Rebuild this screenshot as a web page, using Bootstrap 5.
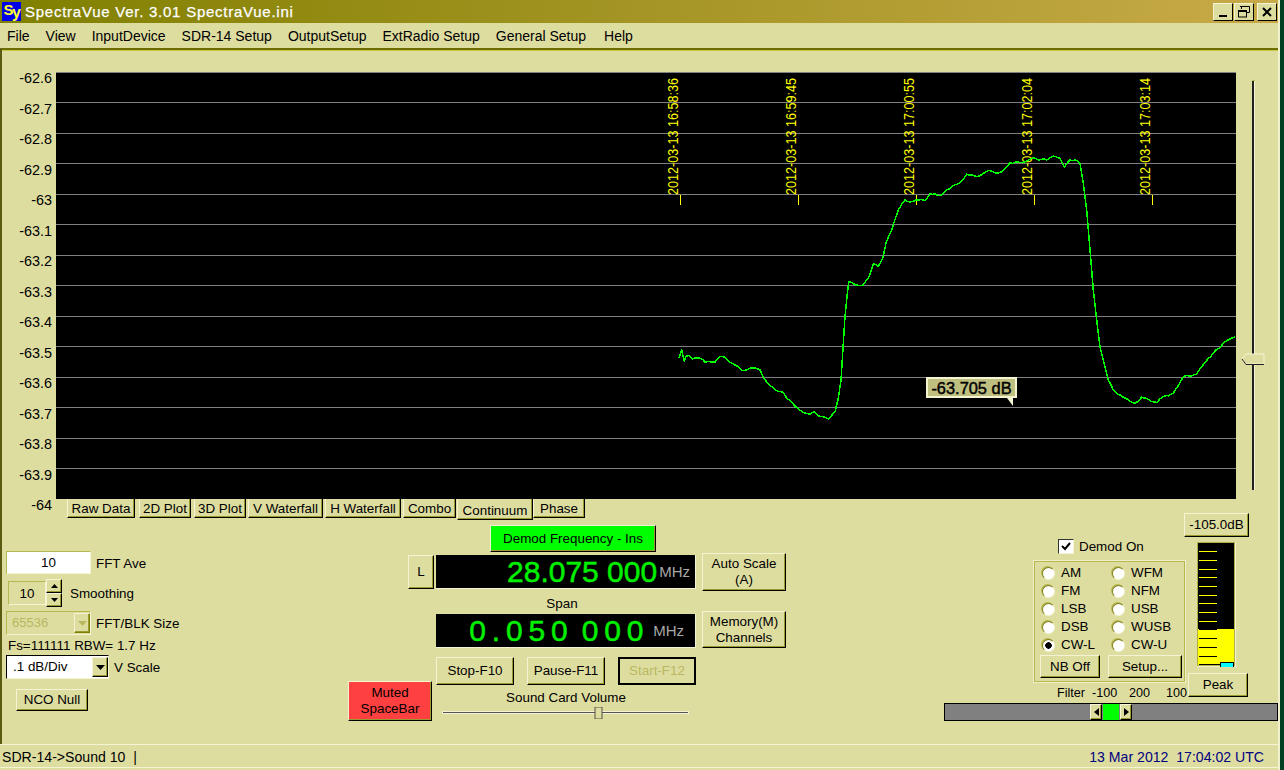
<!DOCTYPE html>
<html lang="en">
<head>
<meta charset="UTF-8">
<title>SpectraVue</title>
<link href="https://cdn.jsdelivr.net/npm/bootstrap@5.3.0/dist/css/bootstrap.min.css" rel="stylesheet">
<style>
    html, body { margin: 0; height: 770px; overflow: hidden; background: #004020; }
    body { font: 13.4px/16px "Liberation Sans", Arial, sans-serif; color: #000; }
    .app { width: 1280px; height: 770px; background: #dedda0; border-right: 2px solid #f0f0cc; }

    .titlebar { height: 23px; padding-left: 2px; background: linear-gradient(90deg, #808000, #c8aa48); color: #fff; }
    .titlebar .caption { margin-left: 4px; font-size: 15px; letter-spacing: .75px; -webkit-text-stroke: .25px #fff; }
    .capbtn { width: 20px; height: 18px; padding: 0; border-radius: 0; background: #dedda0; border: 1px solid; border-color: #f4f4d4 #000 #000 #f4f4d4; display: flex; align-items: center; justify-content: center; }
    .menubar { height: 25px; padding-left: 7px; gap: 16px; font-size: 14px; }
    .menubar .help { margin-left: 2px; }

    .frame { height: 696px; border-top: 2px solid; border-top-color: #6e6e00; border-left: 2px solid #5a5a10; box-shadow: inset 0 1px 0 #c8c840; }
    .plotrow { margin-top: 22px; height: 427px; }
    .axis { width: 50px; margin: -9px 4px -21px 0; font-size: 14.4px; text-align: right; flex: none; }
    .axis div { height: 30.5px; line-height: 30.5px; }
    .plot { position: relative; width: 1180px; height: 427px; background: #000; flex: none; }
    .plot svg { display: block; }
    .tip { position: absolute; left: 870px; top: 305px; width: 91px; height: 21px; background: #bfbf80; border: 2px solid #f4f4d0; font-size: 16.4px; line-height: 18px; text-align: center; -webkit-text-stroke: .45px #000; }

    .btn.win { padding: 0; border-radius: 0; font-size: 13.4px; line-height: 16px; color: #000; background: #dedda0; border: 1px solid; border-color: #f4f4d4 #000 #000 #f4f4d4; box-shadow: inset -1px -1px 0 #9a9a30; }
    .btn.win.red { background: #ff4040; }
    .btn.win.green { background: #00ff00; }
    .btn.win.off { color: #b8b860; border: 2px solid #000; box-shadow: none; }

    .tabs { height: 21px; margin-left: 65px; }
    .btn.tab { height: 19px; border-top: 0; padding-top: 1px; font-size: 13.4px; }
    .btn.tab.on { height: 21px; padding-top: 3px; border-bottom: 1px solid #000; }
    .w-raw { width: 68px; } .w-plot { width: 52px; } .w-vw { width: 75px; } .w-hw { width: 76px; } .w-combo { width: 53px; } .w-cont { width: 76px; } .w-phase { width: 52px; }
    .g4 { margin-left: 4px; } .g3 { margin-left: 3px; } .g2 { margin-left: 2px; } .g1 { margin-left: 1px; }

    .leftcol { width: 346px; padding: 31px 0 0 4px; flex: none; }
    .lbl { padding-top: 2px; }
    .sunk { height: 24px; background: #dedda0; border: 1px solid; border-color: #b8b850 #f4f4d4 #f4f4d4 #b8b850; }
    input.form-control.sunk { padding: 0; border-radius: 0; font-size: 13.4px; text-align: center; color: #000; box-shadow: none; }
    input.form-control.white { width: 85px; height: 23px; background: #fff; }
    input.form-control.spin { width: 38px; background: #dedda0; }
    .spinbtns { width: 16px; }
    .spinbtns .btn.win { width: 16px; height: 14px; }
    .combo { padding-left: 5px; }
    .combo.dim { width: 85px; color: #b8b860; font-size: 13px; background: #dedda0; }
    .combo.vs { width: 103px; height: 24px; padding-left: 6px; background: #fff; border-color: #000 #f4f4d4 #f4f4d4 #000; }
    .btn.win.arrow { width: 16px; height: 20px; flex: none; }
    .r2 { margin: 5px 0 0 2px; height: 28px; }
    .r3 { margin-top: 4px; height: 24px; }
    .r4 { height: 20px; margin-left: 2px; padding-top: 2px; }
    .btn.win.nco { display: block; margin: 10px 0 0 10px; width: 72px; height: 22px; }

    .center { display: grid; flex: none; width: 438px; grid-template-columns: 60px 24px 4px 260px 6px 84px; grid-template-rows: 28px 38px 20px 37px 9px 24px 4px 36px; margin-top: 5px; }
    .lcd { height: 34px; background: #000; color: #00f000; border-bottom: 1px solid #f4f4d4; border-right: 1px solid #f4f4d4; -webkit-text-stroke: .5px #00f000; }
    .lcd small { color: #a8a8a8; font-size: 15px; -webkit-text-stroke: 0; }
    .freq { grid-area: 2 / 4; margin-top: 2px; padding-right: 5px; font-size: 30px; }
    .freq small { margin-left: 2px; }
    .span { grid-area: 4 / 4; margin-top: 3px; padding-right: 11px; font-size: 30px; letter-spacing: 5.8px; word-spacing: -5.8px; }
    .span small { letter-spacing: 0; margin-left: 4px; }
    .demod { grid-area: 1 / 4; margin-left: 54px; width: 166px; height: 27px; }
    .btn.win.lbtn { grid-area: 2 / 2 / 2 / 4; width: 26px; height: 34px; margin-top: 2px; }
    .btn.win.auto { grid-area: 2 / 6; height: 38px; }
    .btn.win.memo { grid-area: 4 / 6; height: 37px; }
    .spanlbl { grid-area: 3 / 4; padding: 0 8px 0 0; margin-bottom: -1px; align-self: end; }
    .transport { grid-area: 6 / 4 / 8 / 4; }
    .transport .btn.win { width: 78px; height: 28px; }
    .muted { grid-area: 7 / 1 / 9 / 3; width: 84px; height: 40px; }
    .volume { grid-area: 8 / 4; padding-top: 5px; }
    .volume svg { display: block; margin: 1px 0 0 6px; }

    .right { width: 334px; margin-left: 158px; flex: none; }
    .right .upper { height: 204px; padding-left: 90px; }
    .modes { width: 151px; padding-top: 40px; flex: none; }
    .demodon { height: 15px; margin-left: 24px; gap: 5px; }
    .chk { width: 16px; height: 15px; background: #fff; border: 1px solid; border-color: #333 #f4f4d4 #f4f4d4 #333; display: flex; align-items: center; justify-content: center; }
    .modebox { width: 151px; height: 121px; margin-top: 7px; padding: 2px 2px 0 5px; border: 1px solid #b8b850; box-shadow: 0 0 0 1px #f0f0c8; }
    .modegrid { display: grid; grid-template-columns: 70px 70px; grid-auto-rows: 18px; }
    .form-check.rad { min-height: 0; margin: 0; padding: 0; display: flex; align-items: center; gap: 6px; }
    .form-check.rad .form-check-input { float: none; margin: 0 0 0 2px; width: 13px; height: 13px; background: #fff; border: 1px solid; border-color: #808020 #f4f4d4 #f4f4d4 #808020; box-shadow: -1px -1px 0 #b8b850; }
    .form-check.rad .form-check-input:checked { background-image: radial-gradient(circle, #000 3px, #fff 3.5px); }
    .btn.win.nb { width: 60px; height: 23px; margin-top: 1px; }
    .btn.win.setup { width: 74px; height: 23px; margin: 1px 0 0 8px; }
    .filterline { margin-top: 3px; padding-left: 23px; height: 16px; font-size: 12.6px; white-space: nowrap; }
    .filterline span { display: inline-block; }
    .fl-a { width: 35px; } .fl-b { width: 37px; }
    .meter { width: 66px; margin-left: -1px; padding-top: 14px; flex: none; }
    .btn.win.db { display: block; width: 65px; height: 24px; }
    .meter svg { display: block; margin: 5px 0 0 13px; }
    .btn.win.peak { display: block; width: 60px; height: 24px; margin: 6px 0 0 4px; }
    .filterbar { height: 18px; background: #808080; border: 1px solid #000; padding-left: 145px; }
    .btn.win.fa { width: 12px; height: 16px; display: flex; align-items: center; justify-content: center; }
    .fgreen { width: 16px; background: #00ff00; margin: 0 1px; }

    .status { height: 24px; padding: 2px 14px 0 0; font-size: 14.1px; border-top: 1px solid #f4f4d4; border-bottom: 1px solid #f4f4d4; }
    .status .when { color: #000080; }
    .status .left { padding-left: 2px; }
</style>
</head>
<body>
<div class="app">
    <!-- titulo -->
    <div class="titlebar d-flex align-items-center">
        <svg width="19" height="19" viewBox="0 0 19 19"><rect width="19" height="19" fill="#0000e8"/><text x="1.5" y="13" font-family="Liberation Sans" font-weight="700" font-size="15" fill="#ffff30">S</text><text x="10" y="16" font-family="Liberation Sans" font-weight="700" font-size="16" fill="#ffff30">y</text></svg>
        <span class="caption">SpectraVue Ver. 3.01 SpectraVue.ini</span>
        <div class="ms-auto d-flex" style="margin-right:1px">
            <button class="btn capbtn"><svg width="12" height="12" viewBox="0 0 12 12"><rect x="2" y="9" width="8" height="2" fill="#000"/></svg></button>
            <button class="btn capbtn" style="margin-left:1px"><svg width="14" height="12" viewBox="0 0 14 12" fill="none" stroke="#000"><path d="M4.5 3V.5h8v6H10"/><path d="M3 .5h9" stroke-width="1"/><rect x="1.5" y="4.5" width="8" height="6.5"/><path d="M1.5 5.5h8"/></svg></button>
            <button class="btn capbtn" style="margin-left:3px"><svg width="12" height="12" viewBox="0 0 12 12" stroke="#000" stroke-width="2" fill="none"><path d="M2 2l8 8M10 2l-8 8"/></svg></button>
        </div>
    </div>
    <div class="menubar d-flex align-items-center">
        <span>File</span><span>View</span><span>InputDevice</span><span>SDR-14 Setup</span><span>OutputSetup</span><span>ExtRadio Setup</span><span>General Setup</span><span class="help">Help</span>
    </div>

    <div class="frame">
        <!-- grafica -->
        <div class="plotrow d-flex">
            <div class="axis">
                <div>-62.6</div><div>-62.7</div><div>-62.8</div><div>-62.9</div><div>-63</div><div>-63.1</div><div>-63.2</div><div>-63.3</div><div>-63.4</div><div>-63.5</div><div>-63.6</div><div>-63.7</div><div>-63.8</div><div>-63.9</div><div>-64</div>
            </div>
            <div class="plot">
                <svg id="chart" width="1180" height="427" viewBox="0 0 1180 427"></svg>
                <div class="tip">-63.705 dB</div>
            </div>
            <svg width="42" height="427" viewBox="0 0 42 427" style="flex:none">
                <rect x="16" y="8" width="3" height="410" fill="#f4f4d4"/>
                <rect x="16" y="8" width="2" height="410" fill="#222"/>
                <rect x="16" y="8" width="3" height="1" fill="#b8b850"/>
                <polygon points="6,287 10,282 28,282 28,292 10,292" fill="#dedda0" stroke="#f4f4d4"/>
                <path d="M6 287l4 5.5h18" fill="none" stroke="#222"/>
            </svg>
        </div>

        <div class="d-flex">
            <div style="width:784px;flex:none">
                <div class="tabs d-flex align-items-start">
                    <button class="btn win tab w-raw">Raw Data</button>
                    <button class="btn win tab w-plot g4">2D Plot</button>
                    <button class="btn win tab w-plot g3">3D Plot</button>
                    <button class="btn win tab w-vw g2">V Waterfall</button>
                    <button class="btn win tab w-hw g2">H Waterfall</button>
                    <button class="btn win tab w-combo g2">Combo</button>
                    <button class="btn win tab on w-cont g1">Continuum</button>
                    <button class="btn win tab w-phase">Phase</button>
                </div>
                <div class="d-flex">
                    <!-- controles izquierda -->
                    <div class="leftcol">
                        <div class="d-flex align-items-center">
                            <input class="form-control sunk white" value="10">
                            <span class="lbl" style="margin-left:5px">FFT Ave</span>
                        </div>
                        <div class="r2 d-flex align-items-center">
                            <input class="form-control sunk spin" value="10">
                            <div class="spinbtns">
                                <button class="btn win d-flex align-items-center justify-content-center"><svg width="7" height="4"><path d="M3.5 0L7 4H0z"/></svg></button>
                                <button class="btn win d-flex align-items-center justify-content-center"><svg width="7" height="4"><path d="M0 0h7L3.5 4z"/></svg></button>
                            </div>
                            <span class="lbl" style="margin-left:8px">Smoothing</span>
                        </div>
                        <div class="r3 d-flex align-items-center">
                            <div class="sunk combo dim d-flex align-items-center justify-content-between">65536<button class="btn win arrow d-flex align-items-center justify-content-center" style="border-color:#f4f4d4 #808000 #808000 #f4f4d4"><svg width="9" height="5"><path d="M0 0h9L4.5 5z" fill="#b8b860"/></svg></button></div>
                            <span class="lbl" style="margin-left:5px">FFT/BLK Size</span>
                        </div>
                        <div class="r4 d-flex align-items-center">Fs=111111 RBW= 1.7 Hz</div>
                        <div class="d-flex align-items-center">
                            <div class="sunk combo vs d-flex align-items-center justify-content-between">.1 dB/Div<button class="btn win arrow d-flex align-items-center justify-content-center"><svg width="9" height="5"><path d="M0 0h9L4.5 5z"/></svg></button></div>
                            <span class="lbl" style="margin-left:5px">V Scale</span>
                        </div>
                        <button class="btn win nco">NCO Null</button>
                    </div>

                    <!-- controles centro -->
                    <div class="center">
                        <button class="btn win green demod">Demod Frequency - Ins</button>
                        <button class="btn win lbtn">L</button>
                        <div class="lcd freq d-flex align-items-center justify-content-end"><span>28.075 000</span><small>MHz</small></div>
                        <button class="btn win auto">Auto Scale<br>(A)</button>
                        <div class="spanlbl text-center">Span</div>
                        <div class="lcd span d-flex align-items-center justify-content-end"><span>0.050 000</span><small>MHz</small></div>
                        <button class="btn win memo">Memory(M)<br>Channels</button>
                        <div class="transport d-flex justify-content-between">
                            <button class="btn win">Stop-F10</button>
                            <button class="btn win">Pause-F11</button>
                            <button class="btn win off">Start-F12</button>
                        </div>
                        <button class="btn win red muted">Muted<br>SpaceBar</button>
                        <div class="volume text-center">
                            Sound Card Volume
                            <svg width="250" height="12" viewBox="0 0 250 12"><rect x="0" y="4" width="247" height="3" fill="#f4f4d4"/><rect x="1" y="5" width="245" height="1" fill="#555"/><rect x="153" y="0" width="7" height="12" fill="#dedda0" stroke="#333" stroke-width=".8"/></svg>
                        </div>
                    </div>
                </div>
            </div>

            <!-- controles derecha -->
            <div class="right">
                <div class="upper d-flex">
                    <div class="modes">
                        <div class="demodon d-flex align-items-center">
                            <span class="chk"><svg width="10" height="9" viewBox="0 0 10 9"><path d="M1 4l3 3 5-6" fill="none" stroke="#000" stroke-width="2"/></svg></span>
                            <span>Demod On</span>
                        </div>
                        <div class="modebox">
                            <div class="modegrid">
                                <label class="form-check rad"><input class="form-check-input" type="radio" name="m">AM</label>
                                <label class="form-check rad"><input class="form-check-input" type="radio" name="m">WFM</label>
                                <label class="form-check rad"><input class="form-check-input" type="radio" name="m">FM</label>
                                <label class="form-check rad"><input class="form-check-input" type="radio" name="m">NFM</label>
                                <label class="form-check rad"><input class="form-check-input" type="radio" name="m">LSB</label>
                                <label class="form-check rad"><input class="form-check-input" type="radio" name="m">USB</label>
                                <label class="form-check rad"><input class="form-check-input" type="radio" name="m">DSB</label>
                                <label class="form-check rad"><input class="form-check-input" type="radio" name="m">WUSB</label>
                                <label class="form-check rad"><input class="form-check-input" type="radio" name="m" checked>CW-L</label>
                                <label class="form-check rad"><input class="form-check-input" type="radio" name="m">CW-U</label>
                            </div>
                            <div class="d-flex">
                                <button class="btn win nb">NB Off</button>
                                <button class="btn win setup">Setup...</button>
                            </div>
                        </div>
                        <div class="filterline"><span class="fl-a">Filter</span><span class="fl-b">-100</span><span class="fl-b">200</span><span>100</span></div>
                    </div>
                    <div class="meter">
                        <button class="btn win db">-105.0dB</button>
                        <svg width="39" height="125" viewBox="0 0 39 125">
                            <rect width="39" height="125" fill="#f4f4d4"/>
                            <rect width="38" height="124" fill="#b0b040"/>
                            <rect x="1" y="1" width="36" height="122" fill="#000"/>
                            <rect x="1" y="87" width="36" height="36" fill="#ffff00"/>
                            <path d="M2 9.5h18M2 18.5h18M2 27.5h18M2 35.5h18M2 44.5h18M2 53.5h18M2 61.5h18M2 70.5h18M2 79.5h18" stroke="#ffff00"/>
                            <path d="M2 87.5h18M2 96.5h18M2 105.5h18M2 114.5h18M2 122.5h21" stroke="#000"/>
                            <rect x="23.5" y="120.5" width="13" height="5" fill="#00ffff" stroke="#000"/>
                        </svg>
                        <button class="btn win peak">Peak</button>
                    </div>
                </div>
                <div class="filterbar d-flex">
                    <button class="btn win fa"><svg width="5" height="8"><path d="M5 0v8L0 4z"/></svg></button>
                    <div class="fgreen"></div>
                    <button class="btn win fa"><svg width="5" height="8"><path d="M0 0v8l5-4z"/></svg></button>
                </div>
            </div>
        </div>
    </div>

    <div class="status d-flex align-items-center justify-content-between">
        <span class="left">SDR-14-&gt;Sound 10 &nbsp;|</span>
        <span class="when">13 Mar 2012 &nbsp;17:04:02 UTC</span>
    </div>
</div>

<script>
    // puntos leidos de la captura, en coordenadas de pagina
    const tramo1 = [[27,505],[30,495],[35,478],[38,495],[43,512],[48,500],[55,496],[68,506],[80,503],[100,510],[105,517],[120,515],[135,516],[150,500],[160,499],[172,510],[180,517],[195,525],[205,530],[215,541],[230,540],[250,534],[270,540],[283,567],[300,587],[315,599],[340,607],[350,625],[375,648],[395,664],[420,672],[433,665],[450,680],[475,687],[495,665],[505,625],[513,570],[518,490],[525,380],[533,300],[537,275],[555,284],[580,285],[595,265],[610,222],[625,229],[638,205],[648,160],[665,120],[685,60],[705,30],[720,36],[738,30],[765,32],[780,12],[810,17],[830,0]]
        .map(p => [670 + p[0] / 3, 190 + p[1] / 3]);
    const tramo2 = [[0,128],[20,103],[50,110],[85,92],[110,100],[130,92],[150,68],[180,68],[215,55],[260,60],[280,48],[300,55],[313,82],[330,60],[345,60],[360,70],[370,130],[380,210],[390,330],[400,450],[410,540],[420,620],[445,720],[460,750],[490,772],[525,790],[545,772],[590,788],[610,770],[640,760],[670,710],[710,702],[745,655],[790,610],[825,590]]
        .map(p => [960 + p[0] / 3, 140 + p[1] / 3]);

    // añade el ruido fino de la traza entre punto y punto
    function conRuido(puntos) {
        const out = [];
        puntos.forEach((p, i) => {
            out.push(p);
            const q = puntos[i + 1];
            if (!q) return;
            const pasos = Math.floor((q[0] - p[0]) / 2.5);
            for (let k = 1; k < pasos; k++) {
                const t = k / pasos;
                const x = p[0] + (q[0] - p[0]) * t;
                out.push([x, p[1] + (q[1] - p[1]) * t + Math.sin(x * 1.9) * .8]);
            }
        });
        return out;
    }

    let svg = '';
    for (let i = 0; i < 14; i++) {
        const y = Math.floor(i * 30.5) + .5;
        svg += `<line x1="0" x2="1180" y1="${y}" y2="${y}" stroke="#808080"/>`;
    }
    const horas = ['16:58:36', '16:59:45', '17:00:55', '17:02:04', '17:03:14'];
    horas.forEach((h, i) => {
        const x = 624.5 + i * 118;
        svg += `<line x1="${x}" x2="${x}" y1="123" y2="133" stroke="#ffff00"/>`;
        svg += `<text transform="translate(${x - 3} 123) rotate(-90) scale(1 1.1)" font-family="Liberation Sans" font-size="12.6" fill="#ffff00">2012-03-13 ${h}</text>`;
    });
    const pts = conRuido(tramo1.concat(tramo2)).map(p => (p[0] - 56).toFixed(1) + ',' + (p[1] - 72).toFixed(1)).join(' ');
    svg += `<polyline points="${pts}" fill="none" stroke="#00ff00" stroke-width="1.5" shape-rendering="crispEdges"/>`;
    svg += '<polygon points="951,326 957,326 957,334" fill="#f4f4d0"/>';
    document.getElementById('chart').innerHTML = svg;
</script>
<script src="https://cdn.jsdelivr.net/npm/bootstrap@5.3.0/dist/js/bootstrap.bundle.min.js"></script>
</body>
</html>
